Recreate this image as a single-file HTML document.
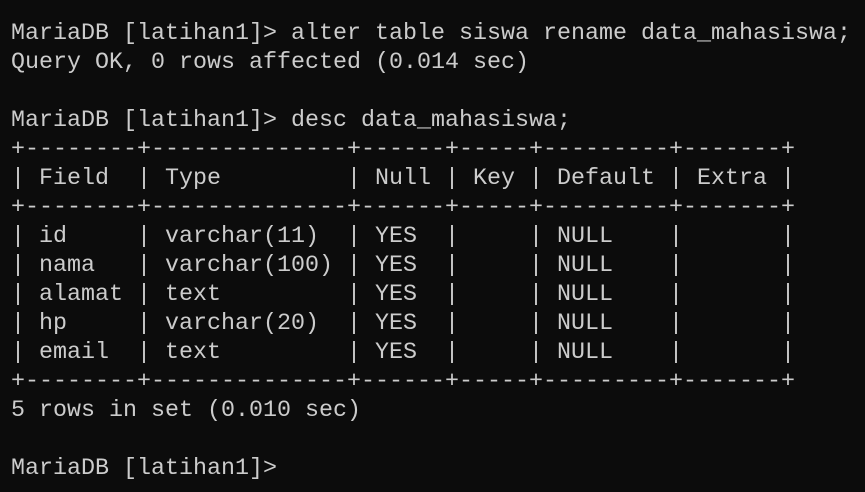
<!DOCTYPE html>
<html><head><meta charset="utf-8"><style>
html,body{margin:0;padding:0;background:#0c0c0c;width:865px;height:492px;overflow:hidden}
pre{margin:0;position:absolute;left:11px;top:20px;font-family:"Liberation Mono","DejaVu Sans Mono",monospace;font-size:23.33px;line-height:29px;color:#cccccc;white-space:pre}
</style></head><body><pre>MariaDB [latihan1]&gt; alter table siswa rename data_mahasiswa;
Query OK, 0 rows affected (0.014 sec)

MariaDB [latihan1]&gt; desc data_mahasiswa;
+--------+--------------+------+-----+---------+-------+
| Field  | Type         | Null | Key | Default | Extra |
+--------+--------------+------+-----+---------+-------+
| id     | varchar(11)  | YES  |     | NULL    |       |
| nama   | varchar(100) | YES  |     | NULL    |       |
| alamat | text         | YES  |     | NULL    |       |
| hp     | varchar(20)  | YES  |     | NULL    |       |
| email  | text         | YES  |     | NULL    |       |
+--------+--------------+------+-----+---------+-------+
5 rows in set (0.010 sec)

MariaDB [latihan1]&gt;</pre></body></html>
